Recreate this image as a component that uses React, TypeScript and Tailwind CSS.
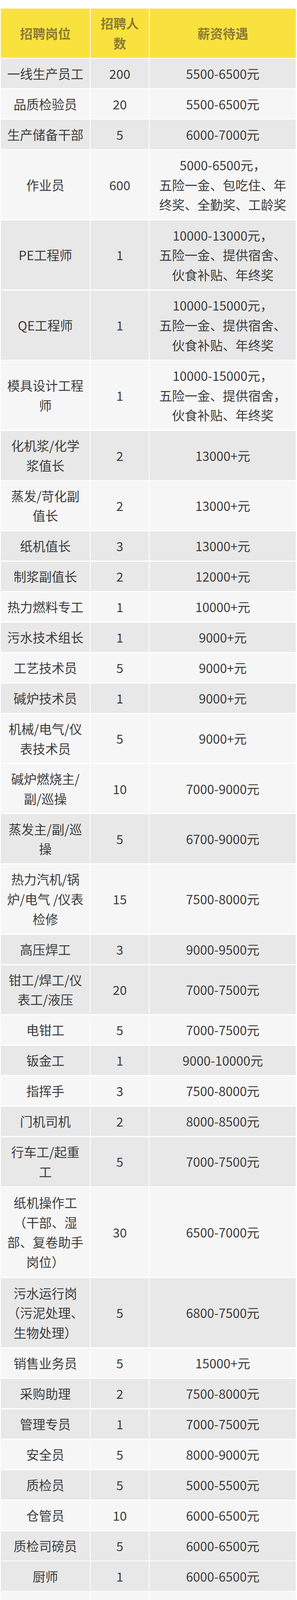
import React from "react";

type Row = {
  pos: string[];
  num: string;
  pay: string[];
  dark: boolean;
};

const TALK = "详谈，按公司标配福利";
const TALK2 = "谈，按公司标配福利";

// row height by number of text lines
const HEIGHT: Record<number, string> = {
  1: "h-[75.3px]",
  2: "h-[125.7px]",
  3: "h-[177px]",
  4: "h-[230px]",
};

const ROWS: Row[] = [
  { pos: ["一线生产员工"], num: "200", pay: ["5500-6500元"], dark: true },
  { pos: ["品质检验员"], num: "20", pay: ["5500-6500元"], dark: false },
  { pos: ["生产储备干部"], num: "5", pay: ["6000-7000元"], dark: true },
  {
    pos: ["作业员"],
    num: "600",
    pay: ["5000-6500元，", "五险一金、包吃住、年", "终奖、全勤奖、工龄奖"],
    dark: false,
  },
  {
    pos: ["PE工程师"],
    num: "1",
    pay: ["10000-13000元，", "五险一金、提供宿舍、", "伙食补贴、年终奖"],
    dark: true,
  },
  {
    pos: ["QE工程师"],
    num: "1",
    pay: ["10000-15000元，", "五险一金、提供宿舍、", "伙食补贴、年终奖"],
    dark: true,
  },
  {
    pos: ["模具设计工程", "师"],
    num: "1",
    pay: ["10000-15000元，", "五险一金、提供宿舍，", "伙食补贴、年终奖"],
    dark: false,
  },
  { pos: ["化机浆/化学", "浆值长"], num: "2", pay: ["13000+元"], dark: true },
  { pos: ["蒸发/苛化副", "值长"], num: "2", pay: ["13000+元"], dark: false },
  { pos: ["纸机值长"], num: "3", pay: ["13000+元"], dark: true },
  { pos: ["制浆副值长"], num: "2", pay: ["12000+元"], dark: true },
  { pos: ["热力燃料专工"], num: "1", pay: ["10000+元"], dark: false },
  { pos: ["污水技术组长"], num: "1", pay: ["9000+元"], dark: true },
  { pos: ["工艺技术员"], num: "5", pay: ["9000+元"], dark: false },
  { pos: ["碱炉技术员"], num: "1", pay: ["9000+元"], dark: true },
  { pos: ["机械/电气/仪", "表技术员"], num: "5", pay: ["9000+元"], dark: false },
  { pos: ["碱炉燃烧主/", "副/巡操"], num: "10", pay: ["7000-9000元"], dark: false },
  { pos: ["蒸发主/副/巡", "操"], num: "5", pay: ["6700-9000元"], dark: true },
  {
    pos: ["热力汽机/锅", "炉/电气 /仪表", "检修"],
    num: "15",
    pay: ["7500-8000元"],
    dark: false,
  },
  { pos: ["高压焊工"], num: "3", pay: ["9000-9500元"], dark: true },
  { pos: ["钳工/焊工/仪", "表工/液压"], num: "20", pay: ["7000-7500元"], dark: true },
  { pos: ["电钳工"], num: "5", pay: ["7000-7500元"], dark: false },
  { pos: ["钣金工"], num: "1", pay: ["9000-10000元"], dark: true },
  { pos: ["指挥手"], num: "3", pay: ["7500-8000元"], dark: false },
  { pos: ["门机司机"], num: "2", pay: ["8000-8500元"], dark: true },
  { pos: ["行车工/起重", "工"], num: "5", pay: ["7000-7500元"], dark: true },
  {
    pos: ["纸机操作工", "（干部、湿", "部、复卷助手", "岗位）"],
    num: "30",
    pay: ["6500-7000元"],
    dark: false,
  },
  {
    pos: ["污水运行岗", "（污泥处理、", "生物处理）"],
    num: "5",
    pay: ["6800-7500元"],
    dark: true,
  },
  { pos: ["销售业务员"], num: "5", pay: ["15000+元"], dark: false },
  { pos: ["采购助理"], num: "2", pay: ["7500-8000元"], dark: true },
  { pos: ["管理专员"], num: "1", pay: ["7000-7500元"], dark: true },
  { pos: ["安全员"], num: "5", pay: ["8000-9000元"], dark: false },
  { pos: ["质检员"], num: "5", pay: ["5000-5500元"], dark: true },
  { pos: ["仓管员"], num: "10", pay: ["6000-6500元"], dark: false },
  { pos: ["质检司磅员"], num: "5", pay: ["6000-6500元"], dark: true },
  { pos: ["厨师"], num: "1", pay: ["6000-6500元"], dark: true },
  { pos: ["面点师"], num: "1", pay: ["6000-6600元"], dark: false },
  { pos: ["厨工"], num: "1", pay: ["5000-5500元"], dark: true },
  { pos: ["安保"], num: "10", pay: ["6000-6800元"], dark: false },
  { pos: ["叉车司机（抱", "车）"], num: "10", pay: ["7000-8000元"], dark: true },
  { pos: ["叉车司机（平", "叉）"], num: "10", pay: ["6000-7000元"], dark: true },
  { pos: ["辅助工"], num: "10", pay: ["5800-6500元"], dark: false },
  { pos: ["检修工"], num: "10", pay: ["6500-7000元"], dark: true },
  {
    pos: ["一线操作工"],
    num: "300",
    pay: ["5500-9000元，公寓宿", "舍4人间，自助餐"],
    dark: false,
  },
  {
    pos: ["实习生"],
    num: "200",
    pay: ["5500-9000元，公寓宿", "舍4人间，自助餐"],
    dark: true,
  },
  { pos: ["MI工程师"], num: "5", pay: ["15000-20000元，具体", TALK], dark: true },
  {
    pos: ["产品项目工程", "师"],
    num: "3",
    pay: ["15000-20000元，具体", TALK],
    dark: false,
  },
  {
    pos: ["机加工工程师", "（钻孔）"],
    num: "1",
    pay: ["15000-20000元，具体", TALK],
    dark: true,
  },
  {
    pos: ["机加工工程师", "（压合）"],
    num: "1",
    pay: ["15000-20000元，具体", TALK],
    dark: false,
  },
  {
    pos: ["机加工工程师", "（成型）"],
    num: "1",
    pay: ["15000-20000元，具体", TALK],
    dark: true,
  },
  {
    pos: ["材料认证工程", "师"],
    num: "1",
    pay: ["15000-20000元，具体", TALK],
    dark: true,
  },
  {
    pos: ["仿真性工程师"],
    num: "1",
    pay: ["15000-20000元，具体", TALK],
    dark: false,
  },
  {
    pos: ["生产三废管理", "工程师"],
    num: "1",
    pay: ["8000-12000元，具体详", TALK2],
    dark: true,
  },
  {
    pos: ["审计专员（工", "程方向）"],
    num: "1",
    pay: ["10000-15000元，具体", TALK],
    dark: false,
  },
  {
    pos: ["MES开发运维", "工程师"],
    num: "2",
    pay: ["20000-30000元，具体", TALK],
    dark: true,
  },
  {
    pos: ["数据库运维工", "程师"],
    num: "1",
    pay: ["20000-30000元，具体", TALK],
    dark: true,
  },
  {
    pos: ["物业主管"],
    num: "1",
    pay: ["9000-15000元，具体详", TALK2],
    dark: false,
  },
  {
    pos: ["商务专员（接", "待）"],
    num: "2",
    pay: ["8000-15000元，具体详", TALK2],
    dark: true,
  },
  {
    pos: ["销售专员"],
    num: "3",
    pay: ["6000-10000元，具体详", TALK2],
    dark: false,
  },
  {
    pos: ["CQE工程师"],
    num: "1",
    pay: ["12000-20000元，具体", TALK],
    dark: true,
  },
  {
    pos: ["化验室工程师"],
    num: "1",
    pay: ["8000-10000元，具体详", TALK2],
    dark: true,
  },
  {
    pos: ["FQA工程师"],
    num: "1",
    pay: ["7000-12000元，具体详", TALK2],
    dark: false,
  },
  {
    pos: ["PQA工程师", "（钻孔）"],
    num: "1",
    pay: ["10000-13000元，具体", TALK],
    dark: true,
  },
  {
    pos: ["设备工程师"],
    num: "8",
    pay: ["8000-13000元，具体详", TALK2],
    dark: false,
  },
  {
    pos: ["湿流程工艺工", "程师"],
    num: "1",
    pay: ["18000-25000元，具体", TALK],
    dark: true,
  },
  {
    pos: ["线路工艺工程", "师"],
    num: "1",
    pay: ["15000-20000元，具体", TALK],
    dark: true,
  },
  {
    pos: ["压合工艺工程", "师"],
    num: "1",
    pay: ["15000-20000元，具体", TALK],
    dark: false,
  },
  {
    pos: ["成本控制工程", "师"],
    num: "1",
    pay: ["15000-20000元，具体", TALK],
    dark: true,
  },
];

function Lines({ lines }: { lines: string[] }) {
  return (
    <>
      {lines.map((l, i) => (
        <span key={i} className="block h-[50.6px] whitespace-pre">
          {l}
        </span>
      ))}
    </>
  );
}

function Cell({ dark, children }: { dark: boolean; children: React.ReactNode }) {
  return (
    <div
      className={
        dark
          ? "flex flex-col items-center justify-center bg-[#e8e8e8] text-center"
          : "flex flex-col items-center justify-center bg-[#f6f6f6] text-center"
      }
    >
      {children}
    </div>
  );
}

export default function App() {
  return (
    <div className="relative min-h-[7934px] w-[760px] bg-white pl-[2px] pt-[22px] font-['Noto_Sans_CJK_SC','Noto_Sans',sans-serif] text-[32.5px] leading-[50.6px] text-[#3c3c3c]">
      <div className="flex flex-col gap-y-[2.7px]">
        <div className="grid h-[125.7px] grid-cols-[228px_149px_374px] gap-x-[2px] font-bold text-[#8b7b35]">
          <div className="flex items-center justify-center bg-[#f9e23e]">招聘岗位</div>
          <div className="flex flex-col items-center justify-center bg-[#f9e23e]">
            <span className="block h-[50.6px]">招聘人</span>
            <span className="block h-[50.6px]">数</span>
          </div>
          <div className="flex items-center justify-center bg-[#f9e23e]">薪资待遇</div>
        </div>

        {ROWS.map((r, i) => (
          <div
            key={i}
            className={`grid ${HEIGHT[Math.max(r.pos.length, r.pay.length)]} grid-cols-[228px_149px_374px] gap-x-[2px]`}
          >
            <Cell dark={r.dark}>
              <Lines lines={r.pos} />
            </Cell>
            <Cell dark={r.dark}>
              <span className="block h-[50.6px]">{r.num}</span>
            </Cell>
            <Cell dark={r.dark}>
              <Lines lines={r.pay} />
            </Cell>
          </div>
        ))}
      </div>

      {/* watermark */}
      <div className="absolute bottom-[9px] right-[6px] text-[21px] leading-none text-white [text-shadow:0_0_2px_#000,0_0_1px_#000]">
        荔视频
      </div>
    </div>
  );
}
